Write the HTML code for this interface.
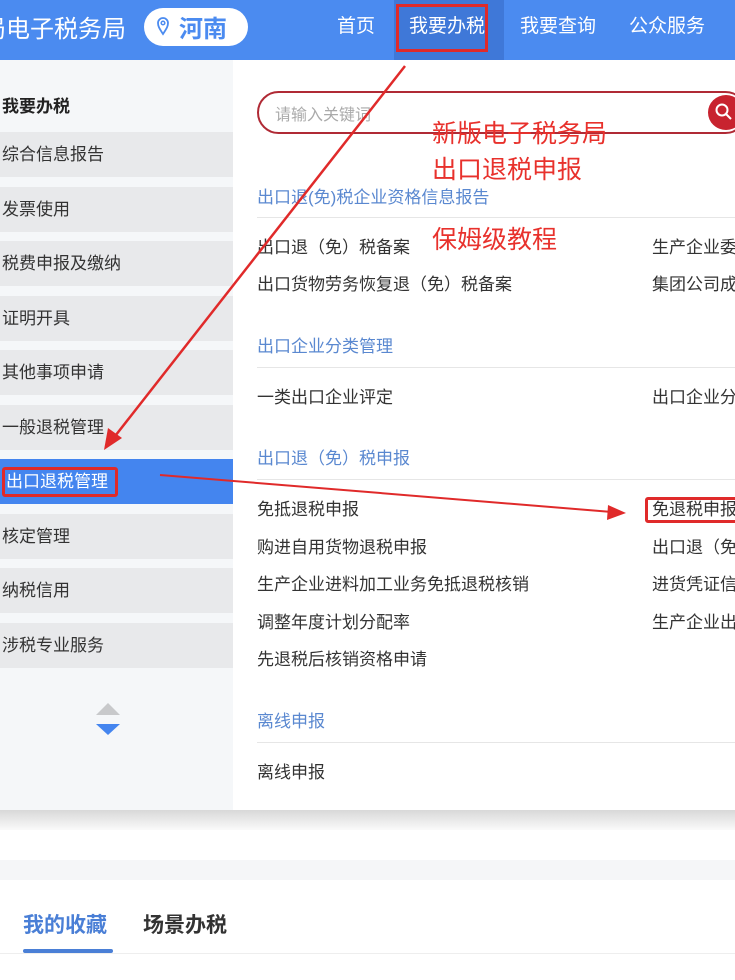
<!DOCTYPE html>
<html><head><meta charset="utf-8"><style>
*{margin:0;padding:0;box-sizing:border-box}
body{width:735px;height:980px;overflow:hidden;background:#fff;font-family:"Liberation Sans","Noto Sans CJK SC",sans-serif;position:relative;color:#333}
.hdr{position:absolute;left:0;top:0;width:735px;height:60px;background:#4b8bf0}
.t{position:absolute;white-space:nowrap}
.side{position:absolute;left:0;top:60px;width:233px;height:750px;background:#f5f7f9}
.it{position:absolute;left:0;width:233px;height:45px;background:#e8e9eb;font-size:17px;line-height:45px;padding-left:2px;color:#333}
.main{position:absolute;left:233px;top:60px;width:502px;height:750px;background:#fff}
.sec{position:absolute;left:257px;font-size:17px;color:#5a88d0}
.ln{position:absolute;left:257px;width:478px;height:1px;background:#e6e6e6}
.lk{position:absolute;font-size:17px;color:#333;white-space:nowrap}
.ann{position:absolute;left:432px;font-size:25px;color:#e8312c;white-space:nowrap}
</style></head><body>
<div class="hdr"></div>
<div class="t" style="left:-18px;top:9px;font-size:24px;color:#fff">局电子税务局</div>
<div style="position:absolute;left:144px;top:8px;width:104px;height:38px;border-radius:19px;background:#fff"></div>
<svg style="position:absolute;left:156px;top:16px" width="14" height="20" viewBox="0 0 14 20"><path d="M7 18 C3 12 2 10 2 7 A5 5 0 0 1 12 7 C12 10 11 12 7 18Z" fill="none" stroke="#4b8bf0" stroke-width="1.8"/><circle cx="7" cy="7" r="1.8" fill="none" stroke="#4b8bf0" stroke-width="1.5"/></svg>
<div class="t" style="left:179px;top:9px;font-size:24px;color:#4b8bf0;font-weight:bold">河南</div>
<div style="position:absolute;left:394px;top:0;width:110px;height:60px;background:#3f78d8"></div>
<div class="t" style="left:337px;top:11px;font-size:19px;color:#fff">首页</div>
<div class="t" style="left:409px;top:11px;font-size:19px;color:#fff">我要办税</div>
<div class="t" style="left:520px;top:11px;font-size:19px;color:#fff">我要查询</div>
<div class="t" style="left:629px;top:11px;font-size:19px;color:#fff">公众服务</div>
<div style="position:absolute;left:396px;top:4px;width:92px;height:48px;border:3px solid #e02a2a"></div>

<div class="side"></div>
<div class="t" style="left:2px;top:92px;font-size:17px;font-weight:bold;color:#222">我要办税</div>
<div class="it" style="top:132px">综合信息报告</div>
<div class="it" style="top:187px">发票使用</div>
<div class="it" style="top:241px">税费申报及缴纳</div>
<div class="it" style="top:296px">证明开具</div>
<div class="it" style="top:350px">其他事项申请</div>
<div class="it" style="top:405px">一般退税管理</div>
<div class="it" style="top:459px;background:#4485ef;color:#fff;padding-left:6px">出口退税管理</div>
<div class="it" style="top:514px">核定管理</div>
<div class="it" style="top:568px">纳税信用</div>
<div class="it" style="top:623px">涉税专业服务</div>
<div style="position:absolute;left:2px;top:467px;width:116px;height:30px;border:3px solid #e02a2a;border-radius:3px"></div>
<svg style="position:absolute;left:95px;top:703px" width="26" height="34"><path d="M1 12 L13 0 L25 12Z" fill="#c8c9cb"/><path d="M1 21 L13 32 L25 21Z" fill="#4485ef"/></svg>

<div class="main"></div>
<div style="position:absolute;left:257px;top:91px;width:490px;height:43px;border:2px solid #b02a35;border-radius:22px"></div>
<div class="t" style="left:275px;top:101px;font-size:16px;color:#aaa">请输入关键词</div>
<div style="position:absolute;left:708px;top:95px;width:36px;height:35px;border-radius:50%;background:#c8232f"></div>
<svg style="position:absolute;left:715px;top:103px" width="18" height="18"><circle cx="7" cy="7" r="5.5" fill="none" stroke="#fff" stroke-width="2"/><path d="M11 11 L16 16" stroke="#fff" stroke-width="2"/></svg>

<div class="sec" style="top:183px">出口退(免)税企业资格信息报告</div>
<div class="ln" style="top:217px"></div>
<div class="lk" style="left:257px;top:233px">出口退（免）税备案</div>
<div class="lk" style="left:652px;top:233px">生产企业委</div>
<div class="lk" style="left:257px;top:270px">出口货物劳务恢复退（免）税备案</div>
<div class="lk" style="left:652px;top:270px">集团公司成</div>
<div class="sec" style="top:332px">出口企业分类管理</div>
<div class="ln" style="top:367px"></div>
<div class="lk" style="left:257px;top:383px">一类出口企业评定</div>
<div class="lk" style="left:652px;top:383px">出口企业分</div>
<div class="sec" style="top:444px">出口退（免）税申报</div>
<div class="ln" style="top:479px"></div>
<div class="lk" style="left:257px;top:495px">免抵退税申报</div>
<div class="lk" style="left:652px;top:495px">免退税申报</div>
<div class="lk" style="left:257px;top:533px">购进自用货物退税申报</div>
<div class="lk" style="left:652px;top:533px">出口退（免</div>
<div class="lk" style="left:257px;top:570px">生产企业进料加工业务免抵退税核销</div>
<div class="lk" style="left:652px;top:570px">进货凭证信</div>
<div class="lk" style="left:257px;top:608px">调整年度计划分配率</div>
<div class="lk" style="left:652px;top:608px">生产企业出</div>
<div class="lk" style="left:257px;top:645px">先退税后核销资格申请</div>
<div class="sec" style="top:707px">离线申报</div>
<div class="ln" style="top:742px"></div>
<div class="lk" style="left:257px;top:758px">离线申报</div>
<div style="position:absolute;left:645px;top:497px;width:95px;height:26px;border:3px solid #e02a2a;border-radius:3px"></div>

<div style="position:absolute;left:0;top:810px;width:735px;height:20px;background:linear-gradient(#d8d8d8,#fafafa)"></div>
<div style="position:absolute;left:0;top:860px;width:735px;height:20px;background:#f5f6f8"></div>
<div class="t" style="left:23px;top:909px;font-size:21px;font-weight:bold;color:#4a7fd6">我的收藏</div>
<div class="t" style="left:143px;top:909px;font-size:21px;font-weight:bold;color:#333">场景办税</div>
<div style="position:absolute;left:23px;top:949px;width:90px;height:4px;border-radius:2px;background:#4a7fd6"></div>
<div style="position:absolute;left:0;top:953px;width:735px;height:1px;background:#eee"></div>

<div class="ann" style="top:114px">新版电子税务局</div>
<div class="ann" style="top:150px">出口退税申报</div>
<div class="ann" style="top:220px">保姆级教程</div>
<svg style="position:absolute;left:0;top:0" width="735" height="980">
<line x1="405" y1="66" x2="112" y2="440" stroke="#e02a2a" stroke-width="2.5"/>
<path d="M104 450 L108 428 L122 438Z" fill="#e02a2a"/>
<line x1="160" y1="475" x2="612" y2="512" stroke="#e02a2a" stroke-width="2"/>
<path d="M626 513 L608 505 L607 520Z" fill="#e02a2a"/>
</svg>
</body></html>
